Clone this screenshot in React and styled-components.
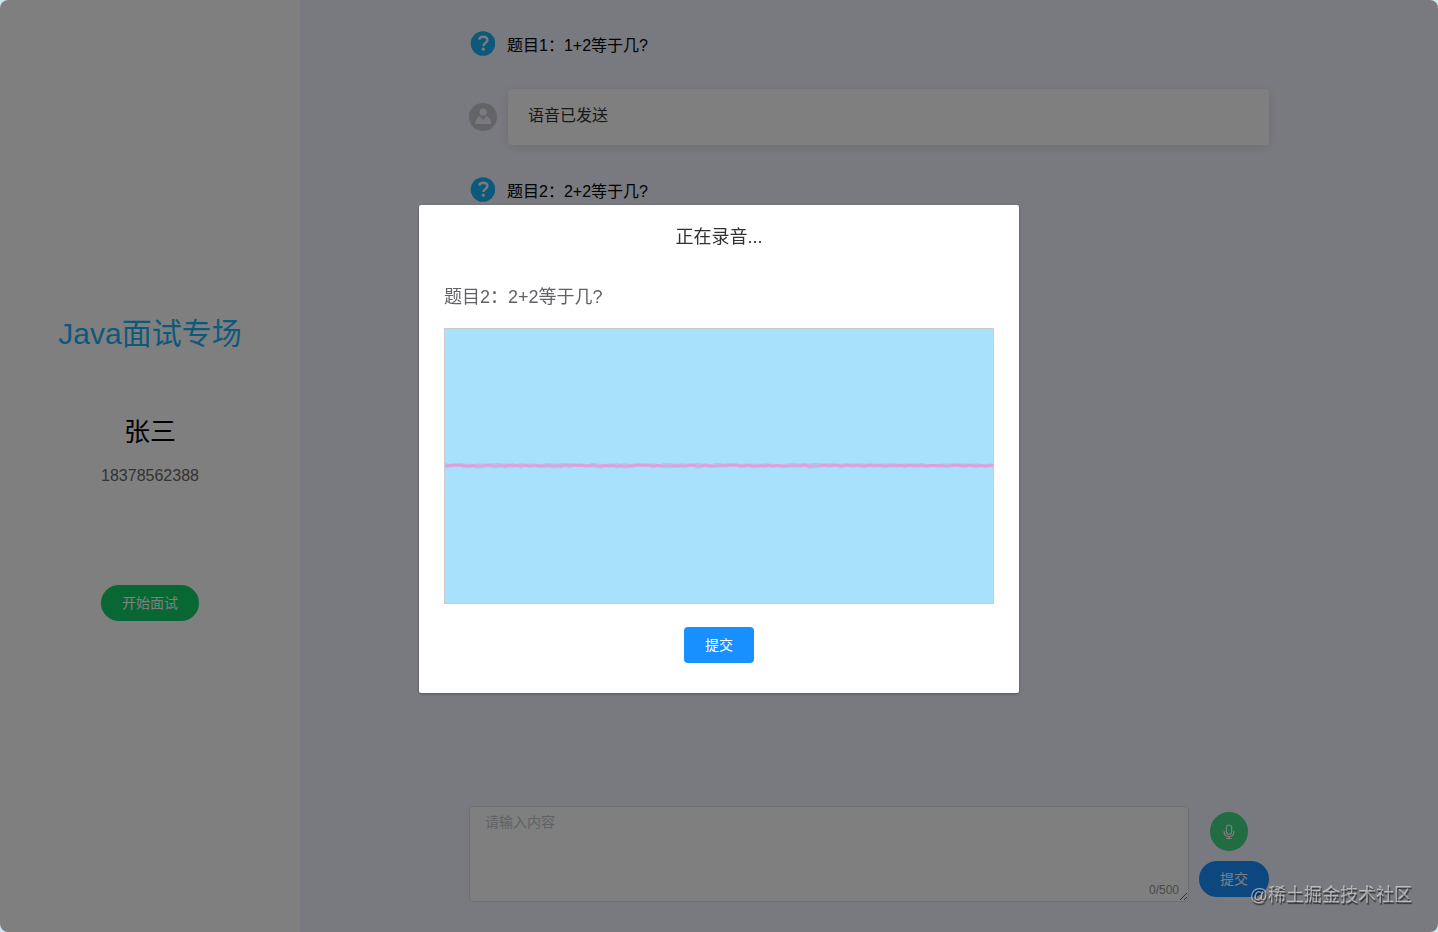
import React, { useState } from 'react';
import styled, { createGlobalStyle, css } from 'styled-components';

const questions = [
  { id: 1, title: '题目1：1+2等于几?', answer: '语音已发送' },
  { id: 2, title: '题目2：2+2等于几?' },
];

const MAX_LENGTH = 500;

const getWavePath = (seed, base, range) => {
  let value = seed;
  const points = [];

  for (let x = 0; x <= 548; x += 4) {
    value = (value * 73 + 41) % 997;
    points.push(`${x} ${(base + (value / 997) * range).toFixed(1)}`);
  }

  return `M${points.join('L')}`;
};

const QuestionIcon = () => (
  <svg width="26" height="26" viewBox="0 0 26 26" aria-hidden="true">
    <circle cx="14" cy="13.5" r="12.3" fill="#1ab2f8" />
    <path
      d="M10.2 9.700c.2-1.900 1.800-2.900 4-2.900 2.500 0 4.200 1.300 4.200 3.300 0 1.600-.9 2.300-2.200 3.100-1.300.8-1.800 1.400-1.800 2.900"
      fill="none"
      stroke="#f3f4fe"
      strokeWidth="2.4"
    />
    <circle cx="14.300" cy="19.200" r="1.600" fill="#f3f4fe" />
  </svg>
);

const AvatarIcon = () => (
  <svg width="28" height="28" viewBox="0 0 28 28" aria-hidden="true">
    <circle cx="14" cy="14" r="14" fill="#c8c9cc" />
    <circle cx="14.200" cy="9.200" r="3.600" fill="#f3f4fe" />
    <path
      d="M6 20.900c.4-3.900 1.900-6.600 4.900-7.600l3.300 4 3.200-4c3 1 4.500 3.700 4.900 7.600z"
      fill="#f3f4fe"
    />
  </svg>
);

const MicIcon = () => (
  <svg
    width="14"
    height="16"
    viewBox="0 0 14 16"
    fill="none"
    stroke="#fff"
    strokeWidth="1.200"
    aria-hidden="true"
  >
    <rect x="4.400" y="1" width="5.200" height="9.400" rx="2.600" />
    <path d="M2.200 7v1.300c0 2.500 2 4.200 4.800 4.200s4.800-1.700 4.800-4.200V7M7 12.500v2M4.300 14.500h5.400" />
  </svg>
);

export default function App() {
  const [content, setContent] = useState('');

  return (
    <>
      <GlobalStyle />
      <Page>
        <Sidebar>
          <SubjectTitle>Java面试专场</SubjectTitle>
          <UserName>张三</UserName>
          <Phone>18378562388</Phone>
          <Button $color="#13ce66" $round>
            开始面试
          </Button>
        </Sidebar>
        <Main>
          <Column>
            <ChatList>
              {questions.map(question => (
                <li key={question.id}>
                  <QuestionRow>
                    <QuestionIcon />
                    <QuestionTitle>{question.title}</QuestionTitle>
                  </QuestionRow>
                  {question.answer && (
                    <AnswerRow>
                      <AvatarIcon />
                      <AnswerCard>{question.answer}</AnswerCard>
                    </AnswerRow>
                  )}
                </li>
              ))}
            </ChatList>
            <Editor>
              <TextBox>
                <TextArea
                  aria-label="请输入内容"
                  placeholder="请输入内容"
                  maxLength={MAX_LENGTH}
                  value={content}
                  onChange={e => setContent(e.target.value)}
                />
                <Count>
                  {content.length}/{MAX_LENGTH}
                </Count>
              </TextBox>
              <Actions>
                <MicButton aria-label="录音">
                  <MicIcon />
                </MicButton>
                <Button $color="#1890ff" $round>
                  提交
                </Button>
              </Actions>
            </Editor>
          </Column>
        </Main>
      </Page>
      <Overlay>
        <Dialog role="dialog" aria-modal="true" aria-labelledby="record-title">
          <DialogTitle id="record-title">正在录音...</DialogTitle>
          <DialogBody>
            <DialogQuestion>{questions[1].title}</DialogQuestion>
            <Wave viewBox="0 0 548 274" preserveAspectRatio="none">
              <path d={getWavePath(17, 135.5, 1)} />
              <path d={getWavePath(230, 136, 2)} />
            </Wave>
            <Button $color="#1890ff">提交</Button>
          </DialogBody>
        </Dialog>
      </Overlay>
      <Watermark>@稀土掘金技术社区</Watermark>
    </>
  );
}

const GlobalStyle = createGlobalStyle`
  * {
    box-sizing: border-box;
  }

  body {
    margin: 0;
    background: #cfe9ee;
    font-family: 'Liberation Sans', 'Noto Sans CJK SC', sans-serif;
  }

  h1, h2, h3, p, ul {
    margin: 0;
    padding: 0;
    font-weight: 400;
    list-style: none;
  }

  button, textarea {
    font-family: inherit;
  }
`;

const flexCenter = css`
  display: flex;
  align-items: center;
  justify-content: center;
`;

const Page = styled.div`
  display: flex;
  min-height: 100vh;
  border-radius: 8px;
  overflow: hidden;
  background: #f3f4fe;
`;

const Sidebar = styled.aside`
  ${flexCenter}
  flex-direction: column;
  flex-shrink: 0;
  width: 300px;
  padding-top: 1px;
  background: #fff;
`;

const SubjectTitle = styled.h1`
  font-size: 30px;
  line-height: 44px;
  color: #1ab2f8;
`;

const UserName = styled.h2`
  margin-top: 58px;
  font-size: 26px;
  line-height: 36px;
  color: #000;
`;

const Phone = styled.p`
  margin: 15px 0 98px;
  font-size: 16px;
  line-height: 22px;
  color: #666;
`;

const Main = styled.main`
  display: flex;
  justify-content: center;
  flex: 1;
  padding: 30px 20px;
`;

const Column = styled.div`
  display: flex;
  flex-direction: column;
  justify-content: space-between;
  width: 100%;
  max-width: 800px;
`;

const ChatList = styled.ul`
  display: flex;
  flex-direction: column;
  gap: 31px;
`;

const QuestionRow = styled.div`
  display: flex;
  align-items: flex-start;
  gap: 12px;
`;

const QuestionTitle = styled.h3`
  font-size: 16px;
  line-height: 32px;
  color: #000;
`;

const AnswerRow = styled.div`
  display: flex;
  align-items: center;
  gap: 11px;
  margin-top: 27px;
`;

const AnswerCard = styled.div`
  flex: 1;
  padding: 15px 20px 17px;
  border-radius: 4px;
  background: #fff;
  box-shadow: 0 2px 12px 0 rgb(0 0 0 / 10%);
  font-size: 16px;
  line-height: 24px;
  color: #303133;
`;

const Editor = styled.div`
  display: flex;
  align-items: center;
  gap: 10px;
`;

const TextBox = styled.div`
  position: relative;
  flex: 1;
`;

const TextArea = styled.textarea`
  display: block;
  width: 100%;
  height: 96px;
  padding: 5px 15px;
  border: 1px solid #dcdfe6;
  border-radius: 4px;
  background: #fff;
  font-size: 14px;
  line-height: 21px;
  color: #606266;
  resize: vertical;

  &::placeholder {
    color: #c0c4cc;
  }
`;

const Count = styled.span`
  position: absolute;
  right: 10px;
  bottom: 5px;
  font-size: 12px;
  line-height: 14px;
  color: #909399;
`;

const Actions = styled.div`
  display: flex;
  flex-direction: column;
  align-items: center;
  gap: 10px;
  padding-top: 1px;
`;

const Button = styled.button`
  height: 36px;
  padding: 0 ${props => (props.$round ? '21px' : '20px')} 2px;
  border: none;
  border-radius: ${props => (props.$round ? '20px' : '4px')};
  min-width: 70px;
  background: ${props => props.$color};
  font-size: 14px;
  color: #fff;
  cursor: pointer;
`;

const MicButton = styled.button`
  ${flexCenter}
  width: 38px;
  height: 39px;
  margin-right: 10px;
  padding: 0;
  border: none;
  border-radius: 50%;
  background: #42d885;
  cursor: pointer;
`;

const Overlay = styled.div`
  position: fixed;
  inset: 0;
  border-radius: 8px;
  background: rgb(0 0 0 / 50%);
`;

const Dialog = styled.section`
  width: 600px;
  max-width: 100%;
  margin: 22vh auto 50px;
  border-radius: 2px;
  background: #fff;
  box-shadow: 0 1px 3px rgb(0 0 0 / 30%);
`;

const DialogTitle = styled.h2`
  padding: 20px 20px 10px;
  font-size: 18px;
  line-height: 24px;
  text-align: center;
  color: #303133;
`;

const DialogBody = styled.div`
  display: flex;
  flex-direction: column;
  align-items: center;
  padding: 26px 25px 30px;
`;

const DialogQuestion = styled.p`
  align-self: stretch;
  font-size: 18px;
  line-height: 24px;
  color: #606266;
`;

const Wave = styled.svg`
  width: 100%;
  height: 276px;
  margin: 19px 0 23px;
  border: 1px solid #ccc;
  background: #a7e1fc;

  path {
    fill: none;
    stroke: #f488d0;
    stroke-width: 3px;
    opacity: 0.5;
  }
`;

const Watermark = styled.span`
  position: fixed;
  right: 26px;
  bottom: 24px;
  font-size: 18px;
  line-height: 26px;
  color: rgb(255 255 255 / 50%);
  text-shadow: 1px 2px 1px rgb(0 0 0 / 60%);
`;
